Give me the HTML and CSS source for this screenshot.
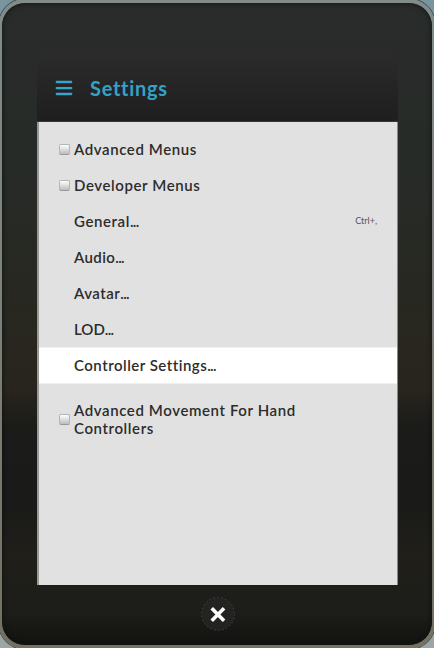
FILE: index.html
```html
<!DOCTYPE html>
<html lang="en">
<head>
<meta charset="utf-8">
<title>Settings</title>
<link rel="stylesheet" href="styles.css">
</head>
<body>
<div class="rim">
<main class="tablet">
  <section class="screen">
    <header class="header">
      <svg class="menu-icon" width="18" height="16" viewBox="0 0 18 16" stroke="#35a5cb" stroke-width="2.3" stroke-linecap="round"><path d="M1.8 2H16.2M1.8 8.2H16.2M1.8 14H16.2"/></svg>
      <h1 class="title">Settings</h1>
    </header>
    <ul class="menu">
      <li class="row"><span class="check"></span><span class="label">Advanced Menus</span></li>
      <li class="row"><span class="check"></span><span class="label">Developer Menus</span></li>
      <li class="row"><span class="label general">General<span class="dots">...</span></span><span class="shortcut">Ctrl+,</span></li>
      <li class="row"><span class="label audio">Audio<span class="dots">...</span></span></li>
      <li class="row"><span class="label avatar">Avatar<span class="dots">...</span></span></li>
      <li class="row"><span class="label lod">LOD<span class="dots">...</span></span></li>
      <li class="row selected"><span class="label controller">Controller Settings<span class="dots">...</span></span></li>
      <li class="row movement-row"><span class="check"></span><span class="label">Advanced Movement For Hand<br>Controllers</span></li>
    </ul>
  </section>
  <footer class="footer">
    <svg class="close" width="34" height="34" viewBox="0 0 34 34"><circle cx="17" cy="17" r="16.4" fill="#232421" stroke="#50524c" stroke-width=".8" stroke-dasharray="1.5 2.5"/><path d="M12 12.6L21.8 22.4M21.8 12.6L12 22.4" stroke="#fff" stroke-width="3.6" stroke-linecap="square"/></svg>
  </footer>
</main>
</div>
</body>
</html>
```
FILE: styles.css
```css
* { box-sizing: border-box; }
body {
  margin: 0;
  width: 434px;
  height: 648px;
  overflow: hidden;
  background: linear-gradient(#7895a0, #9ba6a6);
  font-family: Lato, "Open Sans", sans-serif;
}
.rim {
  width: 436px;
  height: 650px;
  margin: -1px;
  padding: 4px 3px 3px;
  border-radius: 26px;
  background: linear-gradient(#818c89, #7d8078 50%, #757060);
  box-shadow: 0 0 0 1px #3f4b4d;
}
.tablet {
  height: 642px;
  padding: 51px 34px 0 35px;
  border-radius: 23px;
  background: linear-gradient(#292c2a 0, #272b28 25%, #272821 45%, #29251e 60%, #1b1b19 66%, #1a1a18 78%, #201f1a 86%, #1d1d19 95%, #111310 100%);
  box-shadow: inset 0 0 5px 0 #0a1010;
}
.screen {
  height: 531px;
  width: 361px;
}
.header {
  display: flex;
  align-items: center;
  height: 68px;
  padding: 1px 0 0 18px;
  border-bottom: 1px solid #373536;
  background: linear-gradient(#2b2b2b, #1e1e1e);
}
.menu-icon { flex: none; }
.title {
  margin: 0 0 0 17px;
  color: #34a2c7;
  font-size: 20px;
  line-height: 24px;
  font-weight: 700;
  letter-spacing: .7px;
}
.menu {
  height: 463px;
  margin: 0;
  padding: 9px 0 0;
  border-left: 2px solid #999;
  border-right: 1px solid #888;
  background: #e1e1e1;
  list-style: none;
}
.row {
  display: flex;
  align-items: center;
  height: 36px;
  padding: 0 20px 0 35px;
}
.selected {
  height: 37px;
  padding-bottom: 1px;
  border: solid #f0f0f0;
  border-width: 1px 0;
  background: #fff;
}
.check {
  flex: none;
  width: 11px;
  height: 11px;
  margin: 0 4px 0 -15px;
  border: 1px solid #b5b5b5;
  border-bottom-color: #999;
  border-radius: 2px;
  background: linear-gradient(#fff, #bbb);
}
.label {
  color: #2c2c2c;
  font-size: 15px;
  line-height: 18px;
  font-weight: 600;
  letter-spacing: .6px;
  white-space: nowrap;
}
.audio { letter-spacing: .4px; }
.avatar { letter-spacing: .5px; }
.lod { letter-spacing: 0; }
.controller { letter-spacing: .5px; }
.dots { letter-spacing: -.7px; }
.movement-row { margin-top: 17px; }
.shortcut {
  margin-left: auto;
  color: #555;
  font-size: 9px;
  line-height: 12px;
}
.footer {
  display: flex;
  justify-content: center;
  padding: 12px 0 0;
}
```
